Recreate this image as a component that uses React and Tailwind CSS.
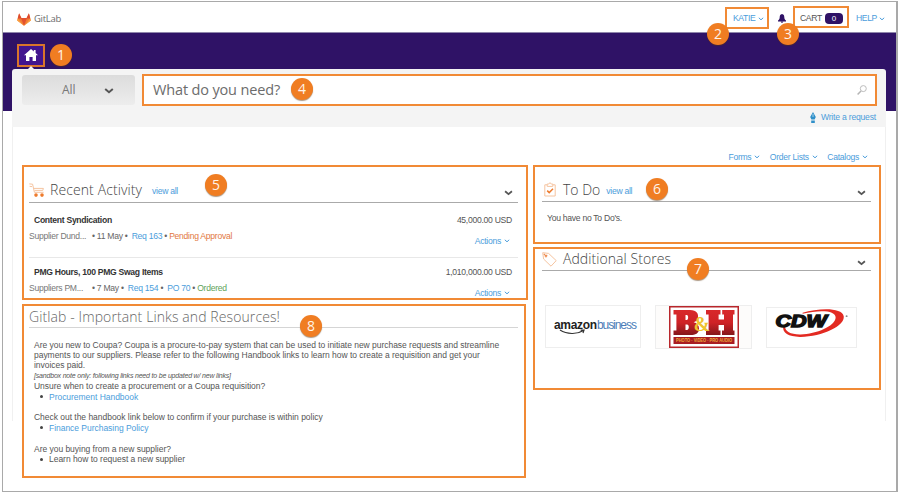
import React from "react";

const SANS = "font-['Liberation_Sans',Arial,sans-serif]";
const OPEN = "font-['Open_Sans',sans-serif]";

function Badge({ n, className }) {
  return (
    <span
      className={`absolute z-10 flex h-[22px] w-[22px] items-center justify-center rounded-full bg-[#f07d22] ${OPEN} text-[14px] leading-none tracking-normal text-[#fff3e8] shadow-[0_1px_1px_rgba(90,50,10,0.5)] ${className}`}
    >
      {n}
    </span>
  );
}

function Caret({ className = "" }) {
  return (
    <svg viewBox="0 0 6 4" className={`h-[4px] w-[6px] shrink-0 ${className}`} fill="none" stroke="currentColor" strokeWidth="1">
      <path d="M0.8 0.8 L3 2.8 L5.2 0.8" />
    </svg>
  );
}

function Chevron({ className = "" }) {
  return (
    <svg viewBox="0 0 10 6" className={`shrink-0 ${className}`} fill="none" stroke="#555" strokeWidth="2">
      <path d="M1.2 1.1 L5 4.3 L8.8 1.1" />
    </svg>
  );
}

function MenuLink({ children, className = "" }) {
  return (
    <a className={`flex items-center gap-[3px] whitespace-nowrap text-[#4b9ddb] ${className}`}>
      {children}
      <Caret />
    </a>
  );
}

function GitLabLogo() {
  return (
    <svg viewBox="0 0 14 13" className="h-[13px] w-[14px]">
      <path d="M7 12.8 L0.2 7.6 L2.1 0.4 L4.4 5 H9.6 L11.9 0.4 L13.8 7.6 Z" fill="#f27b35" />
      <path d="M7 12.8 L4 5 H10 Z" fill="#e2512f" />
      <path d="M2.1 0.2 L4.6 5.4 H0.6 Z M11.9 0.2 L9.4 5.4 H13.4 Z" fill="#dd4b2e" />
      <path d="M0.7 5.4 L0.1 7.6 L7 12.8 Z M13.3 5.4 L13.9 7.6 L7 12.8 Z" fill="#f9a342" />
    </svg>
  );
}

function Header() {
  return (
    <header className="flex h-[30px] items-start pl-[14px] tracking-[-0.34px]">
      <div className="mt-[10px] flex h-[14px] items-center gap-[3px]">
        <GitLabLogo />
        <span className={`${OPEN} text-[9.5px] leading-none tracking-[-0.3px] text-[#6b6b6b]`}>GitLab</span>
      </div>
      <div className="flex-1" />
      <div className="relative mt-[5px] flex h-[22px] w-[44px] items-center border-2 border-[#f18a35] pl-[6px] pt-px">
        <MenuLink>KATIE</MenuLink>
        <Badge n="2" className="left-[-20px] top-[14px]" />
      </div>
      <svg viewBox="0 0 8 9" className="ml-[9px] mt-[12px] h-[9px] w-[8px]" fill="#2f1266">
        <path d="M4 0 C5.8 0.3 6.2 1.6 6.3 3.2 C6.4 5 7 5.8 8 6.6 V7.4 H0 V6.6 C1 5.8 1.6 5 1.7 3.2 C1.8 1.6 2.2 0.3 4 0 Z M2.8 7.8 H5.2 A1.2 1 0 0 1 2.8 7.8 Z" />
      </svg>
      <div className="relative ml-[7px] mt-[4px] flex h-[22px] w-[56px] items-center border-2 border-[#f18a35] pl-[5px] pt-[3px] text-[#555]">
        <span className="w-[25px]">CART</span>
        <span className="flex h-[11px] w-[18px] items-center justify-center rounded-[4px] bg-[#2f1266] text-[8px] tracking-normal text-white">0</span>
        <Badge n="3" className="left-[-18px] top-[15px]" />
      </div>
      <div className="ml-[7px] mr-[11px] mt-[11px] flex h-[11px] items-center">
        <MenuLink className="!gap-[2px]">HELP</MenuLink>
      </div>
    </header>
  );
}

function NavBar() {
  return (
    <nav className="h-[79px] border-t border-[#8f86ab] bg-[#2f1266] pl-[14px] pt-[10.5px]">
      <div className="relative flex h-[23px] w-[28px] items-center justify-center border-2 border-[#d9752b] bg-[#42158f]">
        <svg viewBox="0 0 14 12" className="h-[12px] w-[14px]" fill="#fff">
          <path d="M7 0 L9.8 2.4 V1 H11.6 V4 L14 6.2 H12 V12 H8.6 V8 H5.4 V12 H2 V6.2 H0 Z" />
        </svg>
        <svg viewBox="0 0 8 4" className="absolute left-[7.5px] top-[20px] z-10 h-[4px] w-[8px]" fill="#f4f4f4">
          <path d="M4 0 L8 4 H0 Z" />
        </svg>
        <Badge n="1" className="left-[31px] top-[-1.5px]" />
      </div>
    </nav>
  );
}

function SearchArea() {
  return (
    <div className="h-[58px] rounded-t-[3px] bg-[#f4f4f4] pl-[10px] pr-[9px] pt-[5px]">
      <div className="flex items-start">
        <div className={`mt-px flex h-[30px] w-[113px] items-center rounded-[3px] bg-gradient-to-b from-[#dcdcdc] to-[#ededed] pl-[40px] ${OPEN} text-[12px] leading-none tracking-normal text-[#777]`}>
          All
          <Chevron className="ml-[28px] mt-px h-[6px] w-[10px]" />
        </div>
        <div className="relative ml-[7px] flex h-[32px] flex-1 items-center border-2 border-[#f18a35] bg-white pl-[9px] pr-[8px]">
          <span className={`${OPEN} text-[14.5px] leading-none tracking-[-0.15px] text-[#6c6c6c]`}>What do you need?</span>
          <Badge n="4" className="left-[147px] top-[2px]" />
          <svg viewBox="0 0 10 10" className="ml-auto h-[10px] w-[10px]" fill="none" stroke="#b5b5b5">
            <circle cx="6.3" cy="3.6" r="3" strokeWidth="0.9" />
            <path d="M4 5.9 L0.6 9.4" strokeWidth="1.5" />
          </svg>
        </div>
      </div>
      <div className="mt-[6px] flex h-[11px] items-center justify-end gap-[5px] pr-px tracking-[-0.2px] text-[#4b9ddb]">
        <svg viewBox="0 0 6 11" className="h-[11px] w-[6px]" fill="#2f8fc9">
          <path d="M3 0 L5.8 5 L4.6 7.6 H1.4 L0.2 5 Z M1.2 8.4 H4.8 V11 H1.2 Z" />
          <path d="M3 2 V5" stroke="#d9ecf7" strokeWidth="0.7" />
        </svg>
        Write a request
      </div>
    </div>
  );
}

function Heading({ children, className = "" }) {
  return <h2 className={`${OPEN} whitespace-nowrap text-[14px] font-light leading-none ${className}`}>{children}</h2>;
}

function Activity({ title, price, supplier, children }) {
  return (
    <div className="flex h-[54px] justify-between">
      <div>
        <div className="ml-[5px] mt-[12px] flex h-[10px] items-center font-bold tracking-[-0.3px] text-[#333]">{title}</div>
        <div className="mt-[6px] flex h-[11px] items-center whitespace-pre text-[#777]">
          <span className="w-[63px]">{supplier}</span>
          {children}
        </div>
      </div>
      <div className="flex flex-col items-end pr-[6px]">
        <div className="mt-[12px] flex h-[10px] items-center text-[#555]">{price}</div>
        <MenuLink className="mr-[2px] mt-[11px] h-[10px]">Actions</MenuLink>
      </div>
    </div>
  );
}

function RecentActivity() {
  return (
    <section className="relative h-[135px] w-[506px] border-2 border-[#f18a35] pl-[5px] pr-[8px]">
      <div className="flex h-[36px] items-center border-b border-[#aaa] pt-[11px]">
        <svg viewBox="0 0 16 14" className="h-[14px] w-[16px]" fill="none" stroke="#f5c4a0" strokeWidth="1">
          <path d="M0.3 0.9 L3.6 1.2 L5.4 9.3 H14.6 M3 3.6 L0.6 3.3 M5 5.4 H14.4 L13.8 7.4 H5.6" />
          <circle cx="7" cy="12.1" r="1.8" fill="#ee7b2d" stroke="none" />
          <circle cx="13" cy="12.1" r="1.8" fill="#ee7b2d" stroke="none" />
        </svg>
        <Heading className="ml-[5px] tracking-[0.1px] text-[#444]">Recent Activity</Heading>
        <span className="ml-[10px] mt-[3px] text-[#4b9ddb]">view all</span>
        <Chevron className="ml-auto mr-[5px] mt-[6px] h-[6px] w-[9px]" />
      </div>
      <Badge n="5" className="left-[181px] top-[7px]" />
      <Activity title="Content Syndication" price="45,000.00 USD" supplier="Supplier Dund...">
        <span className="text-[#666]">• 11 May • </span>
        <span className="ml-[2px] text-[#4b9ddb]">Req 163</span>
        <span className="text-[#666]"> • </span>
        <span className="text-[#e2783f]">Pending Approval</span>
      </Activity>
      <div className="-mb-[3px] border-t border-[#e8e8e8]" />
      <Activity title="PMG Hours, 100 PMG Swag Items" price="1,010,000.00 USD" supplier="Suppliers PM...">
        <span className="text-[#666]">• 7 May • </span>
        <span className="ml-[2px] text-[#4b9ddb]">Req 154</span>
        <span className="text-[#666]"> • </span>
        <span className="ml-[2px] text-[#4b9ddb]">PO 70</span>
        <span className="text-[#666]"> • </span>
        <span className="text-[#5fa35a]">Ordered</span>
      </Activity>
    </section>
  );
}

function Resources() {
  return (
    <section className="relative mt-[4px] h-[174px] w-[504px] border-2 border-[#f18a35] pl-[5px] pr-[6px]">
      <div className="flex h-[22px] items-center border-b border-[#d5d5d5]">
        <Heading className="tracking-[0.1px] text-[#666]">Gitlab - Important Links and Resources!</Heading>
      </div>
      <Badge n="8" className="left-[276px] top-[9px]" />
      <div className="pl-[5px] pt-[11.5px] text-[8.5px] leading-[10.4px] tracking-[-0.03px] text-[#555]">
        <p className="whitespace-nowrap">
          Are you new to Coupa? Coupa is a procure-to-pay system that can be used to initiate new purchase requests and streamline
          <br />
          payments to our suppliers. Please refer to the following Handbook links to learn how to create a requisition and get your
          <br />
          invoices paid.
        </p>
        <p className="text-[7px] italic tracking-[-0.19px]">[sandbox note only: following links need to be updated w/ new links]</p>
        <p>Unsure when to create a procurement or a Coupa requisition?</p>
        <Bullet className="text-[#4b9ddb]">Procurement Handbook</Bullet>
        <p className="mt-[10.4px]">Check out the handbook link below to confirm if your purchase is within policy</p>
        <Bullet className="text-[#4b9ddb]">Finance Purchasing Policy</Bullet>
        <p className="mt-[10.4px]">Are you buying from a new supplier?</p>
        <Bullet>Learn how to request a new supplier</Bullet>
      </div>
    </section>
  );
}

function Bullet({ children, className = "" }) {
  return (
    <div className="flex items-center pl-[6px]">
      <span className="mr-[6px] h-[3px] w-[3px] rounded-full bg-[#444]" />
      <span className={className}>{children}</span>
    </div>
  );
}

function ToDo() {
  return (
    <section className="relative h-[79px] w-[348px] border-2 border-[#f18a35] pl-[7px] pr-[8px]">
      <div className="flex h-[35px] items-center border-b border-[#aaa] pt-[11px]">
        <svg viewBox="0 0 12 15" className="ml-[2px] h-[15px] w-[12px]" fill="none" stroke="#f5c4a0" strokeWidth="1">
          <path d="M3 2.8 H0.8 V14 H11.2 V2.8 H9 M3.2 4.4 V2 H4.8 L6 0.6 L7.2 2 H8.8 V4.4 Z" />
          <path d="M3.2 8.6 L5.2 10.6 L9 6.8" stroke="#ee7b2d" strokeWidth="1.5" />
        </svg>
        <Heading className="ml-[7px] tracking-normal text-[#444]">To Do</Heading>
        <span className="ml-[6px] mt-[3px] text-[#4b9ddb]">view all</span>
        <Chevron className="ml-auto mr-[5px] mt-[6px] h-[6px] w-[9px]" />
      </div>
      <Badge n="6" className="left-[111px] top-[11px]" />
      <p className="mt-[11px] flex h-[11px] items-center pl-[5px] text-[#555]">You have no To Do's.</p>
    </section>
  );
}

function AmazonCard() {
  return (
    <div className="flex h-[43px] w-[96px] items-center border border-[#eee] pl-[8px] pb-[3px]">
      <div className="relative flex items-baseline text-[12px] leading-none">
        <span className="font-bold tracking-[-0.3px] text-[#222]">amazon</span>
        <span className="tracking-[-1.05px] text-[#4c7db8]">business</span>
        <svg viewBox="0 0 30 6" className="absolute left-[5px] top-[10px] h-[6px] w-[30px]" fill="none" stroke="#333" strokeWidth="1.2">
          <path d="M1 1 C8 5.5 18 5.5 24 1.8 M21.6 1.2 L25 1.2 L24 4" />
        </svg>
      </div>
    </div>
  );
}

function BHCard() {
  return (
    <div className="flex h-[44px] w-[97px] justify-center border border-[#eee] bg-[#fdfcfb]">
      <svg viewBox="0 0 70 42" className="h-[42px] w-[70px] overflow-visible">
        <defs>
          <linearGradient id="bh" x1="0" y1="0" x2="0" y2="1">
            <stop offset="0" stopColor="#d8292b" />
            <stop offset="0.5" stopColor="#cf2226" />
            <stop offset="1" stopColor="#85171b" />
          </linearGradient>
        </defs>
        <rect x="0.75" y="0.75" width="68.5" height="40.5" fill="#fff" stroke="#b8262b" strokeWidth="1.5" />
        <g transform="translate(4 3)">
          <path fillRule="evenodd" fill="url(#bh)" d="M0.5 1 H17 C24 1 25.5 5 25 8.4 C24.6 11.2 23 12.4 20.6 13.2 C24 14 26 16 26 19.4 C26 24.4 22.4 26 17.4 26 H0.5 V21.4 H3.4 V5.6 H0.5 Z M12.5 6 V11 H13.8 C15.6 11 15.6 6 13.8 6 Z M12.5 15.6 V21 H14 C16.4 21 16.4 15.6 14 15.6 Z" />
          <path fill="url(#bh)" d="M33 1 H47.5 V5.6 H45.6 V10.4 H51 V5.6 H49.2 V1 H61.5 V5.6 H60 V21.4 H61.5 V26 H49 V21.4 H51 V16 H45.6 V21.4 H47.5 V26 H33 V21.4 H35.6 V5.6 H33 Z" />
          <text x="20.5" y="22" fontFamily="Liberation Serif" fontSize="20" fontWeight="bold" letterSpacing="0" fill="#efc32f">&amp;</text>
          <rect x="0.5" y="28" width="61" height="7" fill="#a91d22" />
          <text x="3" y="33.4" fontFamily="Liberation Sans" fontSize="5" fontWeight="bold" letterSpacing="0" fill="#eda83a" textLength="56" lengthAdjust="spacingAndGlyphs">PHOTO · VIDEO · PRO AUDIO</text>
        </g>
      </svg>
    </div>
  );
}

function CDWCard() {
  return (
    <div className="mt-[2px] h-[41px] w-[91px] border border-[#eee]">
      <svg viewBox="0 0 90 39" className="h-[39px] w-[89px] overflow-visible">
        <path fillRule="evenodd" fill="#e32a22" d="M36 4.6 C52 -0.4 76 -1.2 77.6 8 C79 18 56 28.4 34 29 C22 29.2 15.4 25 16.4 18.6 L18.4 18.6 C18 23.6 24 26.8 34 26.6 C50 26 69 18 69.4 9.6 C69.6 1.6 52 1.8 36 5.6 Z" />
        <text x="8.5" y="18.8" fontFamily="Liberation Sans" fontSize="16.5" fontWeight="bold" fontStyle="italic" letterSpacing="0" fill="#111" stroke="#111" strokeWidth="1.4" textLength="52" lengthAdjust="spacingAndGlyphs">CDW</text>
        <circle cx="80.5" cy="8" r="1" fill="#888" />
      </svg>
    </div>
  );
}

function Stores() {
  return (
    <section className="relative mt-[3px] h-[143px] w-[348px] border-2 border-[#f18a35] pl-[7px] pr-[8px]">
      <div className="flex h-[22px] items-center border-b border-[#aaa]">
        <svg viewBox="0 0 15 15" className="h-[15px] w-[15px]" fill="none" stroke="#f5c4a0" strokeWidth="1">
          <path d="M0.7 0.7 L6.6 1.4 L14.2 8.6 L9 14.2 L1.6 7 Z" />
          <path d="M1.8 1.8 L5 5 M5.2 2.8 L3 5.2" stroke="#ee8b4d" strokeWidth="1.2" />
        </svg>
        <Heading className="mb-[2px] ml-[6px] tracking-[0.06px] text-[#444]">Additional Stores</Heading>
        <Chevron className="ml-auto mr-[5px] mt-[6px] h-[6px] w-[9px]" />
      </div>
      <Badge n="7" className="left-[152px] top-[9px]" />
      <div className="mt-[34px] flex items-start pl-[3px]">
        <AmazonCard />
        <div className="w-[14px]" />
        <BHCard />
        <div className="w-[14px]" />
        <CDWCard />
      </div>
    </section>
  );
}

export default function App() {
  return (
    <div className={`h-[495px] w-[899px] overflow-hidden bg-white pl-[2px] pt-px ${SANS} text-[8.6px] leading-none tracking-[-0.28px]`}>
      <div className="h-[491px] w-[896px] border border-r-2 border-[#a9a9a9] bg-white">
        <Header />
        <NavBar />
        <main className="relative -mt-[42px] ml-[9px] h-[352px] w-[874px]">
          <SearchArea />
          <div className="h-[294px] border-x border-[#f0f0f0] bg-white">
            <div className="flex h-[38px] items-center justify-end gap-[9.5px] pr-[17px] pt-[22px]">
              <MenuLink>Forms</MenuLink>
              <MenuLink>Order Lists</MenuLink>
              <MenuLink>Catalogs</MenuLink>
            </div>
            <div className="flex items-start gap-[5px] pl-[9px]">
              <div>
                <RecentActivity />
                <Resources />
              </div>
              <div>
                <ToDo />
                <Stores />
              </div>
            </div>
          </div>
        </main>
      </div>
    </div>
  );
}
